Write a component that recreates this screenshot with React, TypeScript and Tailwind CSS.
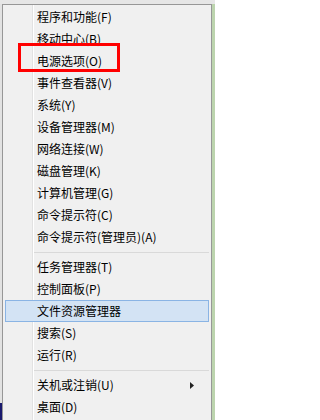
import React from "react";

const groupA = [
  "程序和功能(F)",
  "移动中心(B)",
  "电源选项(O)",
  "事件查看器(V)",
  "系统(Y)",
  "设备管理器(M)",
  "网络连接(W)",
  "磁盘管理(K)",
  "计算机管理(G)",
  "命令提示符(C)",
  "命令提示符(管理员)(A)",
];
const groupB = ["任务管理器(T)", "控制面板(P)", "文件资源管理器", "搜索(S)", "运行(R)"];
const groupC = ["关机或注销(U)", "桌面(D)"];

function Row({ label, active, arrow }: { label: string; active?: boolean; arrow?: boolean }) {
  return (
    <div
      className={
        active
          ? "relative flex h-[22px] items-center border border-[#8ab4e4] bg-[#d3e3f4] pl-[31px] pr-2"
          : "relative flex h-[22px] items-center border border-transparent pl-[31px] pr-2"
      }
    >
      <span className="flex-1 leading-none">{label}</span>
      {arrow && (
        <svg width="4" height="7" viewBox="0 0 4 7" className="mr-[6px]">
          <path d="M0 0 L4 3.5 L0 7 Z" fill="#222" />
        </svg>
      )}
    </div>
  );
}

function Sep() {
  return (
    <div className="flex h-[8px] items-center pl-[28px]">
      <div className="h-px flex-1 bg-[#d9d9d9]" />
    </div>
  );
}

export default function App() {
  return (
    <div
      className="relative flex h-[420px] w-[215px] flex-col overflow-hidden bg-[#e7e7e7] text-[12px] text-black"
      style={{ fontFamily: '"Noto Sans CJK SC", "Noto Sans", sans-serif' }}
    >
      <div className="h-[4px] shrink-0 bg-[#e6e6e6]" />
      <div className="flex flex-1">
        <div className="flex w-[2px] flex-col">
          <div className="flex-1 bg-[#e2e2e2]" />
          <div className="h-[17px] bg-[#1a1a6e]" />
        </div>
        <div className="relative w-[210px] border-l border-r border-t border-[#979797] bg-[#f0f0f0] px-[2px] pt-[1px]">
          <div className="absolute bottom-0 left-[29px] top-0 w-px bg-[#e2e2e2]" />
          <div className="absolute bottom-0 left-[30px] top-0 w-px bg-white" />
          {groupA.map((l) => (
            <Row key={l} label={l} />
          ))}
          <Sep />
          {groupB.map((l) => (
            <Row key={l} label={l} active={l === "文件资源管理器"} />
          ))}
          <Sep />
          {groupC.map((l, i) => (
            <Row key={l} label={l} arrow={i === 0} />
          ))}
        </div>
        <div className="flex-1 bg-[#bcd4ae]" />
      </div>
      <div className="absolute left-[18px] top-[43px] h-[29px] w-[102px] border-[3px] border-[#ff0000]" />
    </div>
  );
}
